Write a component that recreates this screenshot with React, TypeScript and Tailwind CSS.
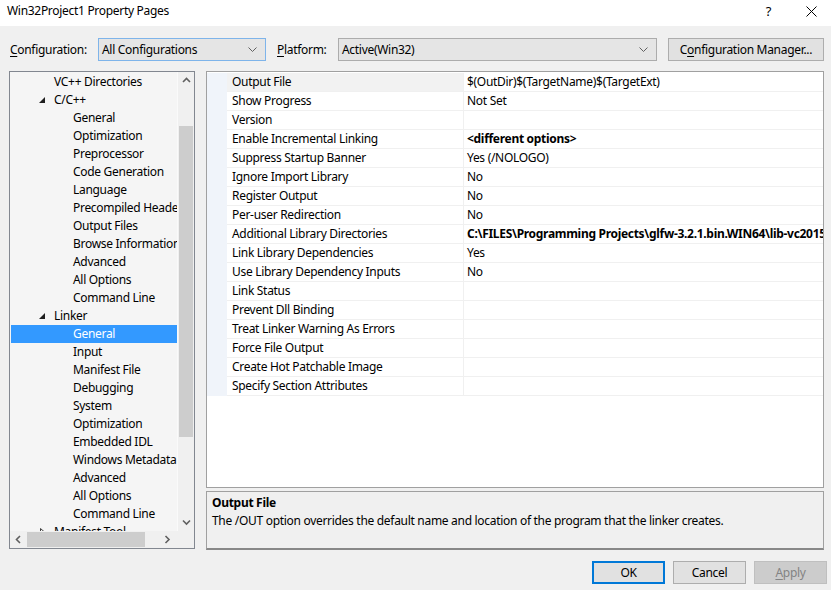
import React from 'react';

const FONT = { fontFamily: '"Noto Sans", "Open Sans", Arial, sans-serif' };

type TreeItem = { label: string; level: 1 | 2; expander?: 'open' | 'closed'; selected?: boolean };

const treeItems: TreeItem[] = [
  { label: 'VC++ Directories', level: 1 },
  { label: 'C/C++', level: 1, expander: 'open' },
  { label: 'General', level: 2 },
  { label: 'Optimization', level: 2 },
  { label: 'Preprocessor', level: 2 },
  { label: 'Code Generation', level: 2 },
  { label: 'Language', level: 2 },
  { label: 'Precompiled Headers', level: 2 },
  { label: 'Output Files', level: 2 },
  { label: 'Browse Information', level: 2 },
  { label: 'Advanced', level: 2 },
  { label: 'All Options', level: 2 },
  { label: 'Command Line', level: 2 },
  { label: 'Linker', level: 1, expander: 'open' },
  { label: 'General', level: 2, selected: true },
  { label: 'Input', level: 2 },
  { label: 'Manifest File', level: 2 },
  { label: 'Debugging', level: 2 },
  { label: 'System', level: 2 },
  { label: 'Optimization', level: 2 },
  { label: 'Embedded IDL', level: 2 },
  { label: 'Windows Metadata', level: 2 },
  { label: 'Advanced', level: 2 },
  { label: 'All Options', level: 2 },
  { label: 'Command Line', level: 2 },
  { label: 'Manifest Tool', level: 1, expander: 'closed' },
];

type Prop = { name: string; value?: string; bold?: boolean };

const props: Prop[] = [
  { name: 'Output File', value: '$(OutDir)$(TargetName)$(TargetExt)' },
  { name: 'Show Progress', value: 'Not Set' },
  { name: 'Version' },
  { name: 'Enable Incremental Linking', value: '<different options>', bold: true },
  { name: 'Suppress Startup Banner', value: 'Yes (/NOLOGO)' },
  { name: 'Ignore Import Library', value: 'No' },
  { name: 'Register Output', value: 'No' },
  { name: 'Per-user Redirection', value: 'No' },
  { name: 'Additional Library Directories', value: 'C:\\FILES\\Programming Projects\\glfw-3.2.1.bin.WIN64\\lib-vc2015;%(AdditionalLibraryDirectories)', bold: true },
  { name: 'Link Library Dependencies', value: 'Yes' },
  { name: 'Use Library Dependency Inputs', value: 'No' },
  { name: 'Link Status' },
  { name: 'Prevent Dll Binding' },
  { name: 'Treat Linker Warning As Errors' },
  { name: 'Force File Output' },
  { name: 'Create Hot Patchable Image' },
  { name: 'Specify Section Attributes' },
];

const Chevron = ({ dir }: { dir: 'up' | 'down' | 'left' | 'right' }) => {
  const d = {
    up: 'M1 5 L4.5 1.5 L8 5',
    down: 'M1 1.5 L4.5 5 L8 1.5',
    left: 'M5 1 L1.5 4.5 L5 8',
    right: 'M1.5 1 L5 4.5 L1.5 8',
  }[dir];
  const horiz = dir === 'left' || dir === 'right';
  return (
    <svg width={horiz ? 7 : 9} height={horiz ? 9 : 7} viewBox={horiz ? '0 0 7 9' : '0 0 9 7'}>
      <path d={d} fill="none" stroke="#606060" strokeWidth="1.6" />
    </svg>
  );
};

const SelectBox = ({ value, width, focused }: { value: string; width: string; focused?: boolean }) => (
  <div
    className={`${width} h-[23px] flex items-center justify-between pl-[3px] pr-[8px] bg-[#e5e5e5] border ${
      focused ? 'border-[#7eb4ea]' : 'border-[#acacac]'
    }`}
  >
    <span className="text-[12px] text-black">{value}</span>
    <svg width="9" height="6" viewBox="0 0 9 6">
      <path d="M0.5 0.5 L4.5 4.5 L8.5 0.5" fill="none" stroke="#606060" strokeWidth="1" />
    </svg>
  </div>
);

const Button = ({ children, variant }: { children: React.ReactNode; variant?: 'default' | 'disabled' }) => {
  const cls =
    variant === 'default'
      ? 'border-2 border-[#0078d7] bg-[#e1e1e1] text-black'
      : variant === 'disabled'
      ? 'border border-[#bfbfbf] bg-[#cccccc] text-[#838383]'
      : 'border border-[#adadad] bg-[#e1e1e1] text-black';
  return <div className={`w-[73px] h-[23px] flex items-center justify-center text-[12px] ${cls}`}>{children}</div>;
};

export default function App() {
  return (
    <div
      className="w-[831px] h-[590px] bg-[#f0f0f0] flex flex-col text-[12px] tracking-[-0.3px] text-black overflow-hidden"
      style={FONT}
    >
      {/* title bar */}
      <div className="h-[26px] bg-white flex items-center justify-between pl-[7px] pr-[14px] shrink-0">
        <span className="text-[12px] leading-none mt-[-4px]">Win32Project1 Property Pages</span>
        <div className="flex items-center gap-[35px] mt-[-4px]">
          <span className="text-[13px] leading-none">?</span>
          <svg width="11" height="11" viewBox="0 0 11 11">
            <path d="M0.5 0.5 L10.5 10.5 M10.5 0.5 L0.5 10.5" stroke="#000" strokeWidth="1" />
          </svg>
        </div>
      </div>

      {/* configuration row */}
      <div className="flex items-center mt-[12px] pl-[10px] h-[23px] shrink-0">
        <span className="w-[88px]">
          <span className="underline underline-offset-2">C</span>onfiguration:
        </span>
        <SelectBox value="All Configurations" width="w-[168px]" focused />
        <span className="ml-[11px] w-[61px]">
          <span className="underline underline-offset-2">P</span>latform:
        </span>
        <SelectBox value="Active(Win32)" width="w-[319px]" />
        <div className="ml-[11px] w-[156px] h-[23px] border border-[#adadad] bg-[#e1e1e1] flex items-center justify-center">
          C<span className="underline underline-offset-2">o</span>nfiguration Manager...
        </div>
      </div>

      {/* main area */}
      <div className="flex mt-[10px] pl-[9px] gap-[11px] shrink-0">
        {/* tree */}
        <div className="w-[186px] h-[478px] border border-[#828790] bg-[#f0f0f0] flex flex-col">
          <div className="flex h-[459px]">
            <div className="w-[167px] h-[459px] overflow-hidden bg-[#f5f5f5] pt-[1px] pl-[1px]">
              {treeItems.map((it, i) => (
                <div
                  key={i}
                  className={`h-[18px] flex items-center whitespace-nowrap ${
                    it.selected ? 'bg-[#3399ff] text-white' : ''
                  }`}
                >
                  <span className={`${it.level === 1 ? 'w-[43px]' : 'w-[62px]'} shrink-0 flex justify-end pr-[9px]`}>
                    {it.expander === 'open' && (
                      <svg width="6" height="6" viewBox="0 0 6 6">
                        <path d="M6 0 L6 6 L0 6 Z" fill="#1e1e1e" />
                      </svg>
                    )}
                    {it.expander === 'closed' && (
                      <svg width="5" height="8" viewBox="0 0 5 8">
                        <path d="M0.5 0.5 L4.5 4 L0.5 7.5 Z" fill="none" stroke="#404040" strokeWidth="1" />
                      </svg>
                    )}
                  </span>
                  <span>{it.label}</span>
                </div>
              ))}
            </div>
            {/* vertical scrollbar */}
            <div className="w-[17px] h-[459px] bg-[#f0f0f0] flex flex-col border-l border-[#fafafa]">
              <div className="h-[17px] flex items-center justify-center">
                <Chevron dir="up" />
              </div>
              <div className="flex-1 flex flex-col">
                <div className="h-[37px]" />
                <div className="h-[311px] mx-[1px] bg-[#cdcdcd]" />
              </div>
              <div className="h-[17px] flex items-center justify-center">
                <Chevron dir="down" />
              </div>
            </div>
          </div>
          {/* horizontal scrollbar */}
          <div className="flex h-[17px]">
            <div className="w-[167px] flex items-center bg-[#f0f0f0]">
              <div className="w-[17px] flex justify-center">
                <Chevron dir="left" />
              </div>
              <div className="w-[118px] h-[15px] bg-[#cdcdcd]" />
              <div className="flex-1 flex justify-end pr-[6px]">
                <Chevron dir="right" />
              </div>
            </div>
            <div className="w-[17px] bg-[#f0f0f0]" />
          </div>
        </div>

        {/* right column */}
        <div className="w-[618px] flex flex-col gap-[3px]">
          <div className="h-[417px] border border-[#a0a0a0] bg-white pt-[1px] overflow-hidden">
            {props.map((p, i) => (
              <div key={i} className="h-[19px] flex">
                <div className="w-[20px] shrink-0 bg-[#f0f4fa]" />
                <div
                  className={`w-[237px] shrink-0 pl-[5px] flex items-center border-b border-r border-[#f0f0f0] ${
                    i === 0 ? 'bg-[#f2f2f2]' : ''
                  }`}
                >
                  {p.name}
                </div>
                <div
                  className={`flex-1 min-w-0 pl-[3px] flex items-center border-b border-[#f0f0f0] whitespace-nowrap overflow-hidden ${
                    p.bold ? 'font-bold' : ''
                  }`}
                >
                  {p.value}
                </div>
              </div>
            ))}
          </div>
          <div className="h-[59px] border border-[#a0a0a0] border-b-[#888888] border-b-2 bg-[#f0f0f0] px-[5px] pt-[2px]">
            <div className="font-bold leading-[18px]">Output File</div>
            <div className="leading-[18px]">
              The /OUT option overrides the default name and location of the program that the linker creates.
            </div>
          </div>
        </div>
      </div>

      {/* buttons */}
      <div className="flex justify-end gap-[8px] pr-[4px] mt-[11px]">
        <Button variant="default">OK</Button>
        <Button>Cancel</Button>
        <Button variant="disabled">
          <span className="underline underline-offset-2">A</span>pply
        </Button>
      </div>
    </div>
  );
}
